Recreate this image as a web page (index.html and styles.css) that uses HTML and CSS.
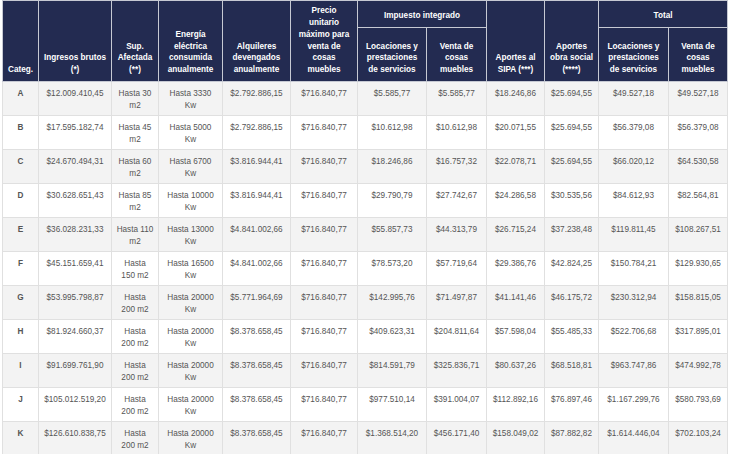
FILE: index.html
```html
<!DOCTYPE html>
<html lang="es">
<head>
<meta charset="utf-8">
<title>Categorías</title>
<link rel="stylesheet" href="styles.css">
</head>
<body>
<table class="tabla">
  <colgroup>
    <col class="c-cat"><col class="c-ing"><col class="c-sup"><col class="c-ene"><col class="c-alq"><col class="c-pre">
    <col class="c-loc"><col class="c-ven"><col class="c-sipa"><col class="c-obra"><col class="c-tloc"><col class="c-tven">
  </colgroup>
  <thead>
    <tr class="h1">
      <th rowspan="2">Categ.</th>
      <th rowspan="2">Ingresos brutos<br>(*)</th>
      <th rowspan="2">Sup.<br>Afectada<br>(**)</th>
      <th rowspan="2">Energía<br>eléctrica<br>consumida<br>anualmente</th>
      <th rowspan="2">Alquileres<br>devengados<br>anualmente</th>
      <th rowspan="2">Precio<br>unitario<br>máximo para<br>venta de<br>cosas<br>muebles</th>
      <th colspan="2">Impuesto integrado</th>
      <th rowspan="2">Aportes al<br>SIPA (***)</th>
      <th rowspan="2">Aportes<br>obra social<br>(****)</th>
      <th colspan="2">Total</th>
    </tr>
    <tr class="h2">
      <th>Locaciones y<br>prestaciones<br>de servicios</th>
      <th>Venta de<br>cosas<br>muebles</th>
      <th>Locaciones y<br>prestaciones<br>de servicios</th>
      <th>Venta de<br>cosas<br>muebles</th>
    </tr>
  </thead>
  <tbody>
    <tr><td class="cat">A</td><td>$12.009.410,45</td><td>Hasta 30<br>m2</td><td>Hasta 3330<br>Kw</td><td>$2.792.886,15</td><td>$716.840,77</td><td>$5.585,77</td><td>$5.585,77</td><td>$18.246,86</td><td>$25.694,55</td><td>$49.527,18</td><td>$49.527,18</td></tr>
    <tr><td class="cat">B</td><td>$17.595.182,74</td><td>Hasta 45<br>m2</td><td>Hasta 5000<br>Kw</td><td>$2.792.886,15</td><td>$716.840,77</td><td>$10.612,98</td><td>$10.612,98</td><td>$20.071,55</td><td>$25.694,55</td><td>$56.379,08</td><td>$56.379,08</td></tr>
    <tr><td class="cat">C</td><td>$24.670.494,31</td><td>Hasta 60<br>m2</td><td>Hasta 6700<br>Kw</td><td>$3.816.944,41</td><td>$716.840,77</td><td>$18.246,86</td><td>$16.757,32</td><td>$22.078,71</td><td>$25.694,55</td><td>$66.020,12</td><td>$64.530,58</td></tr>
    <tr><td class="cat">D</td><td>$30.628.651,43</td><td>Hasta 85<br>m2</td><td>Hasta 10000<br>Kw</td><td>$3.816.944,41</td><td>$716.840,77</td><td>$29.790,79</td><td>$27.742,67</td><td>$24.286,58</td><td>$30.535,56</td><td>$84.612,93</td><td>$82.564,81</td></tr>
    <tr><td class="cat">E</td><td>$36.028.231,33</td><td>Hasta 110<br>m2</td><td>Hasta 13000<br>Kw</td><td>$4.841.002,66</td><td>$716.840,77</td><td>$55.857,73</td><td>$44.313,79</td><td>$26.715,24</td><td>$37.238,48</td><td>$119.811,45</td><td>$108.267,51</td></tr>
    <tr><td class="cat">F</td><td>$45.151.659,41</td><td>Hasta<br>150 m2</td><td>Hasta 16500<br>Kw</td><td>$4.841.002,66</td><td>$716.840,77</td><td>$78.573,20</td><td>$57.719,64</td><td>$29.386,76</td><td>$42.824,25</td><td>$150.784,21</td><td>$129.930,65</td></tr>
    <tr><td class="cat">G</td><td>$53.995.798,87</td><td>Hasta<br>200 m2</td><td>Hasta 20000<br>Kw</td><td>$5.771.964,69</td><td>$716.840,77</td><td>$142.995,76</td><td>$71.497,87</td><td>$41.141,46</td><td>$46.175,72</td><td>$230.312,94</td><td>$158.815,05</td></tr>
    <tr><td class="cat">H</td><td>$81.924.660,37</td><td>Hasta<br>200 m2</td><td>Hasta 20000<br>Kw</td><td>$8.378.658,45</td><td>$716.840,77</td><td>$409.623,31</td><td>$204.811,64</td><td>$57.598,04</td><td>$55.485,33</td><td>$522.706,68</td><td>$317.895,01</td></tr>
    <tr><td class="cat">I</td><td>$91.699.761,90</td><td>Hasta<br>200 m2</td><td>Hasta 20000<br>Kw</td><td>$8.378.658,45</td><td>$716.840,77</td><td>$814.591,79</td><td>$325.836,71</td><td>$80.637,26</td><td>$68.518,81</td><td>$963.747,86</td><td>$474.992,78</td></tr>
    <tr><td class="cat">J</td><td>$105.012.519,20</td><td>Hasta<br>200 m2</td><td>Hasta 20000<br>Kw</td><td>$8.378.658,45</td><td>$716.840,77</td><td>$977.510,14</td><td>$391.004,07</td><td>$112.892,16</td><td>$76.897,46</td><td>$1.167.299,76</td><td>$580.793,69</td></tr>
    <tr><td class="cat">K</td><td>$126.610.838,75</td><td>Hasta<br>200 m2</td><td>Hasta 20000<br>Kw</td><td>$8.378.658,45</td><td>$716.840,77</td><td>$1.368.514,20</td><td>$456.171,40</td><td>$158.049,02</td><td>$87.882,82</td><td>$1.614.446,04</td><td>$702.103,24</td></tr>
  </tbody>
</table>
</body>
</html>
```
FILE: styles.css
```css
html, body {
  margin: 0;
  padding: 0;
  background: #ffffff;
}

body {
  font-family: "Liberation Sans", Arial, sans-serif;
}

.tabla {
  border-collapse: collapse;
  table-layout: fixed;
  width: 726px;
  margin: 0 0 0 2px;
  font-size: 8.2px;
}

.c-cat { width: 36px; }
.c-ing { width: 73px; }
.c-sup { width: 47px; }
.c-ene { width: 64px; }
.c-alq { width: 68px; }
.c-pre { width: 67px; }
.c-loc { width: 69px; }
.c-ven { width: 60px; }
.c-sipa { width: 58px; }
.c-obra { width: 54px; }
.c-tloc { width: 70px; }
.c-tven { width: 59px; }

.tabla th {
  background: #232b51;
  color: #ffffff;
  font-weight: bold;
  text-align: center;
  vertical-align: bottom;
  line-height: 11.8px;
  padding: 2px 3px 5px;
  border: 1px solid #c6c9d3;
}

.h1 { height: 27px; }
.h2 { height: 54px; }

.tabla td {
  color: #555555;
  text-align: center;
  vertical-align: top;
  line-height: 12px;
  padding: 6px 3px 3px;
  border: 1px solid #e0e0e0;
  height: 24px;
}

.tabla td.cat {
  font-weight: bold;
}

.tabla tbody tr:nth-child(odd) td {
  background: #f3f3f3;
}

.tabla tbody tr:nth-child(even) td {
  background: #ffffff;
}
```
